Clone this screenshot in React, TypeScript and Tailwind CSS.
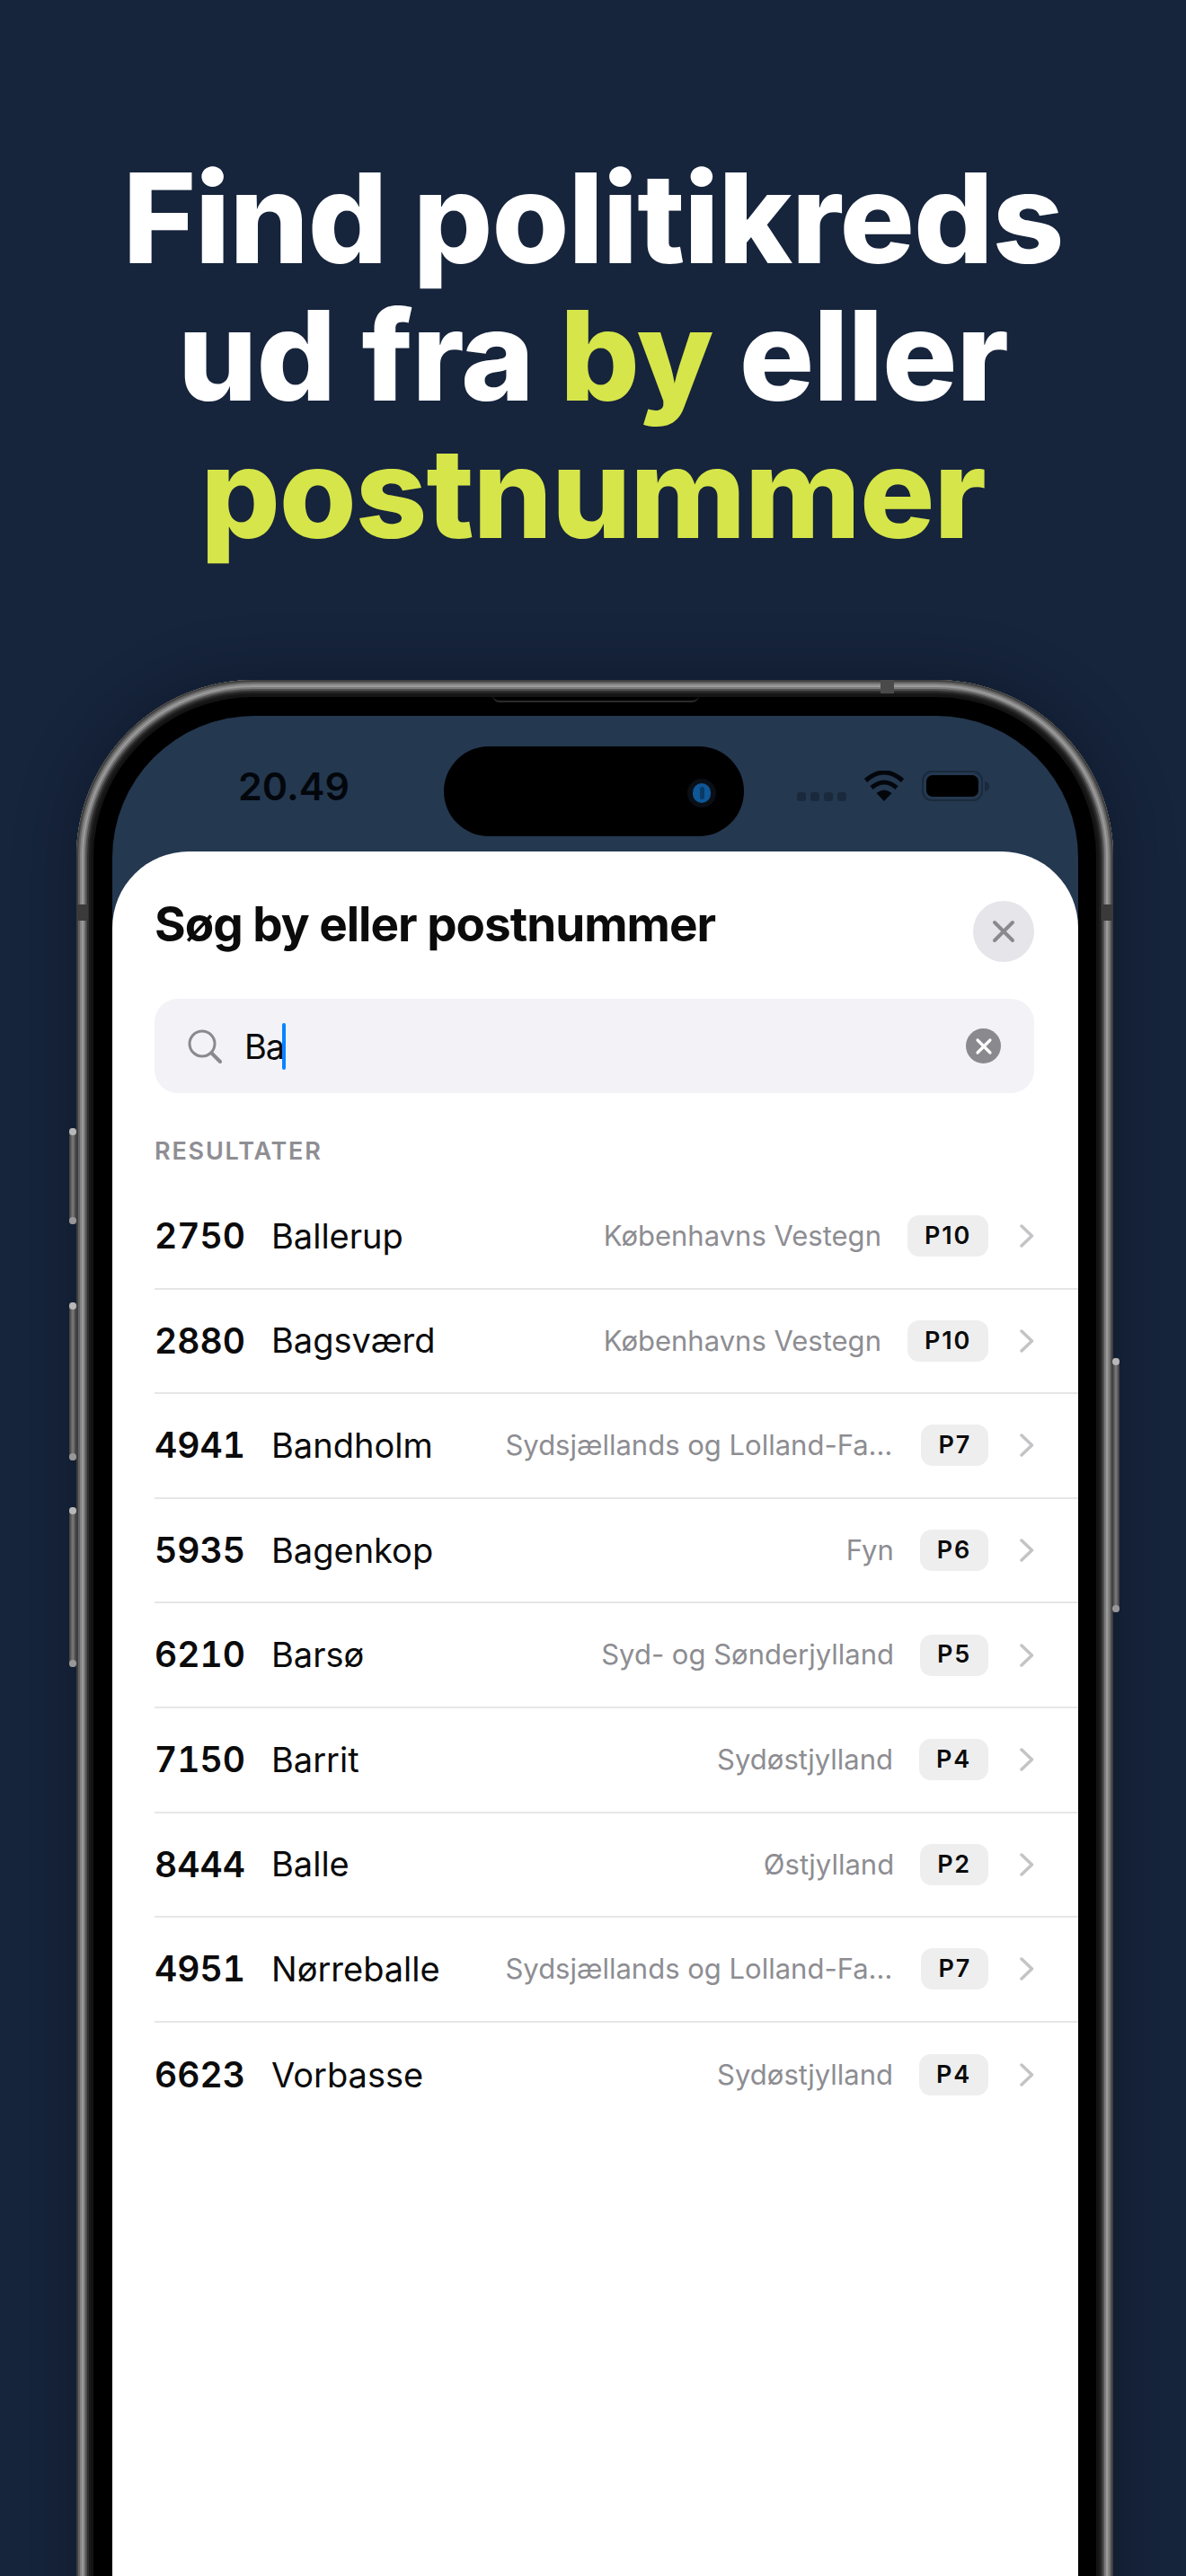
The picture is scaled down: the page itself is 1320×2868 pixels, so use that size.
const rows = [
  { zip: "2750", city: "Ballerup", area: "Københavns Vestegn", tag: "P10" },
  { zip: "2880", city: "Bagsværd", area: "Københavns Vestegn", tag: "P10" },
  { zip: "4941", city: "Bandholm", area: "Sydsjællands og Lolland-Falster", tag: "P7" },
  { zip: "5935", city: "Bagenkop", area: "Fyn", tag: "P6" },
  { zip: "6210", city: "Barsø", area: "Syd- og Sønderjylland", tag: "P5" },
  { zip: "7150", city: "Barrit", area: "Sydøstjylland", tag: "P4" },
  { zip: "8444", city: "Balle", area: "Østjylland", tag: "P2" },
  { zip: "4951", city: "Nørreballe", area: "Sydsjællands og Lolland-Falster", tag: "P7" },
  { zip: "6623", city: "Vorbasse", area: "Sydøstjylland", tag: "P4" },
];

function StatusBar() {
  return (
    <div className="h-[151px] relative pt-[50px]">
      <div className="w-[404px] text-center text-[43px] leading-[56px] font-semibold text-[#03070c]">20.49</div>
      {/* dynamic island */}
      <div className="absolute left-[369px] top-[34px] w-[334px] h-[100px] rounded-full bg-black">
        <div className="absolute left-[271px] top-[36px] w-[32px] h-[32px] rounded-full bg-[#0a0f16] flex items-center justify-center">
          <div className="w-[20px] h-[22px] rounded-full bg-[#0f5796] flex items-center justify-center">
            <div className="w-[5px] h-[14px] rounded-full bg-[#0a3a66]" />
          </div>
        </div>
      </div>
      <div className="absolute left-[762px] top-[61px] h-[34px] flex items-center">
        <div className="flex gap-[5px] mt-[24px] mr-[19px]">
          <span className="w-[10px] h-[10px] rounded-[3px] bg-[#1a2a3c]" />
          <span className="w-[10px] h-[10px] rounded-[3px] bg-[#1a2a3c]" />
          <span className="w-[10px] h-[10px] rounded-[3px] bg-[#1a2a3c]" />
          <span className="w-[10px] h-[10px] rounded-[3px] bg-[#1a2a3c]" />
        </div>
        <svg width="46" height="34" viewBox="0 0 46 34" className="mr-[19px]">
          <path d="M23 34 L14.5 25 Q23 18 31.5 25 Z" fill="#03070c" />
          <path d="M9 19 Q23 7 37 19" fill="none" stroke="#03070c" strokeWidth="5" />
          <path d="M2.5 11 Q23 -7 43.5 11" fill="none" stroke="#03070c" strokeWidth="5" />
        </svg>
        <div className="w-[68px] h-[34px] rounded-[11px] border-2 border-[#1a2a3c] p-[3px]">
          <div className="w-full h-full rounded-[7px] bg-black" />
        </div>
        <div className="w-[5px] h-[11px] rounded-r-full bg-[#1a2a3c] ml-[2px]" />
      </div>
    </div>
  );
}

function ResultRow({ zip, city, area, tag }: { zip: string; city: string; area: string; tag: string }) {
  return (
    <div className="h-[116.6px] flex items-center border-b-2 border-[#e6e6e8] pr-[49px] last:border-b-0">
      <div className="w-[130px] text-[39px] font-semibold tabular-nums text-[#0b0b0c]">{zip}</div>
      <div className="shrink-0 text-[38px] text-[#0b0b0c]">{city}</div>
      <div className="ml-auto max-w-[434px] min-w-0 mr-[29px] text-right text-[31px] text-[#8d8d92] truncate">{area}</div>
      <div className="shrink-0 h-[46px] rounded-[13px] bg-[#eeeeef] px-[19px] flex items-center text-[27px] font-semibold tracking-[1.8px] text-[#0b0b0c]">{tag}</div>
      <svg width="16" height="26" viewBox="0 0 16 26" className="ml-[35px] shrink-0">
        <path d="M2 2 L13.5 13 L2 24" fill="none" stroke="#c4c4c7" strokeWidth="3.5" strokeLinecap="round" strokeLinejoin="round" />
      </svg>
    </div>
  );
}

function SideButton({ className }: { className: string }) {
  return (
    <div className={`absolute w-[8px] rounded-[3px] bg-gradient-to-r from-[#3c3c3c] via-[#7d7d7d] to-[#3c3c3c] ${className}`}>
      <div className="absolute left-0 top-0 w-[8px] h-[8px] rounded-full bg-[#b8b8b8]" />
      <div className="absolute left-0 bottom-0 w-[8px] h-[8px] rounded-full bg-[#989898]" />
    </div>
  );
}

export default function App() {
  return (
    <div className="w-[1320px] h-[2868px] overflow-hidden bg-[#16243c] flex flex-col" style={{ fontFamily: "Inter, 'Liberation Sans', sans-serif" }}>
      <h1 className="mt-[166px] w-full text-center text-[139px] leading-[153px] font-extrabold tracking-[-1px] text-white">
        Find politikreds<br />
        ud fra <span className="text-[#d6e549]">by</span> eller<br />
        <span className="text-[#d6e549]">postnummer</span>
      </h1>

      <div className="relative mt-[132px] ml-[85px] w-[1154px] shrink-0">
        <SideButton className="left-[-8px] top-[499px] h-[107px]" />
        <SideButton className="left-[-8px] top-[693px] h-[176px]" />
        <SideButton className="left-[-8px] top-[921px] h-[178px]" />
        <SideButton className="right-[-7px] top-[755px] h-[283px]" />

        <div className="h-[2400px] rounded-[197px] bg-black pl-[40px] pr-[39px] pt-[40px] shadow-[inset_0_0_0_2px_#3f3f3f,inset_0_0_0_4px_#626262,inset_0_0_0_6px_#858585,inset_0_0_0_8px_#9a9a9a,inset_0_0_0_10px_#7c7c7c,inset_0_0_0_12px_#505050,inset_0_0_0_14px_#2e2e2e,inset_0_0_0_16px_#1c1c1c,inset_0_0_0_19px_#141414,0_0_70px_rgba(0,0,0,0.3)]">
          <div className="h-full rounded-[158px] bg-[#243850] overflow-hidden">
            <StatusBar />
            <div className="h-full rounded-t-[85px] bg-white pl-[47px]">
              <div className="flex items-start pt-[51px] pr-[49px]">
                <div className="flex-1 text-[53px] leading-[60px] font-bold tracking-[-1px] text-[#0b0b0c]">Søg by eller postnummer</div>
                <div className="w-[68px] h-[68px] mt-[4px] rounded-full bg-[#e5e5ea] flex items-center justify-center">
                  <svg width="26" height="26" viewBox="0 0 26 26">
                    <path d="M3 3 L23 23 M23 3 L3 23" stroke="#8a8a8e" strokeWidth="4" strokeLinecap="round" />
                  </svg>
                </div>
              </div>

              <div className="mt-[41px] mr-[49px] h-[105px] rounded-[26px] bg-[#f2f2f7] flex items-center pl-[37px] pr-[37px]">
                <svg width="38" height="38" viewBox="0 0 38 38">
                  <circle cx="16" cy="16" r="14" fill="none" stroke="#8a8a8e" strokeWidth="3" />
                  <path d="M26.5 26.5 L36 36" stroke="#8a8a8e" strokeWidth="4" strokeLinecap="round" />
                </svg>
                <div className="ml-[25px] text-[38px] leading-[48px] tracking-[-1px] text-[#0b0b0c]">Ba</div>
                <div className="w-[4px] h-[52px] -ml-[2px] rounded-full bg-[#0a84ff]" />
                <div className="ml-auto w-[39px] h-[39px] rounded-full bg-[#8a8a8e] flex items-center justify-center">
                  <svg width="20" height="20" viewBox="0 0 20 20">
                    <path d="M3 3 L17 17 M17 3 L3 17" stroke="#ffffff" strokeWidth="3.2" strokeLinecap="round" />
                  </svg>
                </div>
              </div>

              <div className="mt-[49px] text-[27px] leading-[32px] font-semibold tracking-[1.8px] text-[#8e8e93]">RESULTATER</div>

              <div className="mt-[21px]">
                {rows.map((r) => (
                  <ResultRow key={r.zip} {...r} />
                ))}
              </div>
            </div>
          </div>
        </div>

        {/* speaker slit and antenna bands on the frame */}
        <div className="absolute left-[463px] top-[15px] w-[230px] h-[10px] rounded-b-[8px] border-b-2 border-[#2a2a2a]" />
        <div className="absolute left-[895px] top-0 w-[15px] h-[15px] bg-[#4a4a4a]" />
        <div className="absolute left-0 top-[250px] w-[13px] h-[18px] bg-[#3a3a3a]" />
        <div className="absolute right-0 top-[250px] w-[13px] h-[18px] bg-[#3a3a3a]" />
      </div>
    </div>
  );
}
